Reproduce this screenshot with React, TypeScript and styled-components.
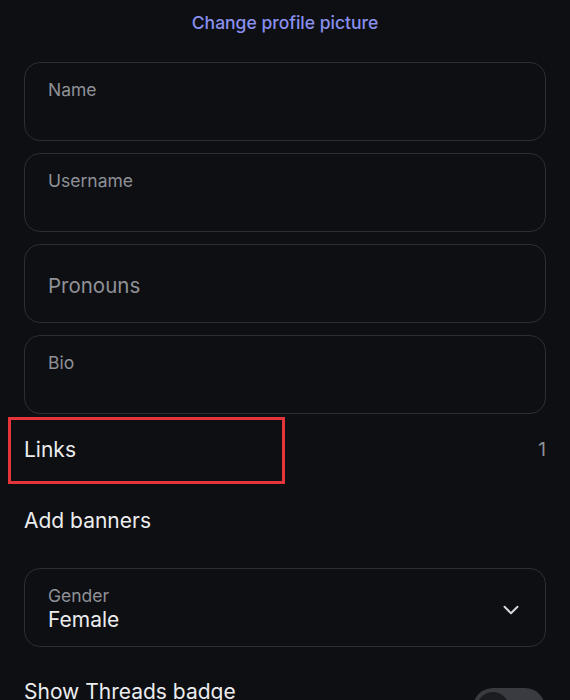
import styled, { createGlobalStyle } from "styled-components";
import { ChevronDown } from "lucide-react";

const GlobalStyle = createGlobalStyle`
  html, body {
    margin: 0;
    padding: 0;
    background: #0d0f13;
  }
  body {
    font-family: Inter, "Noto Sans", "Liberation Sans", sans-serif;
    color: #ececee;
    -webkit-font-smoothing: antialiased;
  }
`;

const Page = styled.div`
  width: 570px;
  height: 700px;
  overflow: hidden;
  background: #0d0f13;
  box-sizing: border-box;
  padding: 0 24px;
  display: flex;
  flex-direction: column;

  & > * {
    flex-shrink: 0;
  }
`;

const ChangePicture = styled.div`
  padding-top: 12px;
  margin-bottom: 28px;
  text-align: center;
  line-height: 22px;
  font-size: 17.5px;
  font-weight: 500;
  color: #8a90ee;
`;

const FieldList = styled.div`
  display: flex;
  flex-direction: column;
  gap: 12px;
`;

const FieldBox = styled.div<{ $centered?: boolean }>`
  flex-shrink: 0;
  height: 79px;
  box-sizing: border-box;
  border: 1.5px solid #2b2e34;
  border-radius: 16px;
  padding: ${(p) => (p.$centered ? "4px 23px 0" : "15px 23px 0")};
  display: flex;
  flex-direction: column;
  justify-content: ${(p) => (p.$centered ? "center" : "flex-start")};
`;

const FieldLabel = styled.div`
  font-size: 17.5px;
  line-height: 24px;
  color: #8f9197;
`;

const Placeholder = styled.div`
  font-size: 20.5px;
  line-height: 26px;
  color: #8f9197;
`;

const FieldValue = styled.div`
  font-size: 21px;
  line-height: 26px;
  color: #ececee;
`;

const Row = styled.div`
  position: relative;
  height: 71px;
  display: flex;
  align-items: center;
  justify-content: space-between;
  font-size: 21px;
  color: #ececee;
`;

const RowCount = styled.span`
  color: #8f9197;
  font-size: 19px;
`;

const Highlight = styled.div`
  position: absolute;
  left: -16px;
  top: 3px;
  width: 277px;
  height: 67px;
  box-sizing: border-box;
  border: 3.5px solid #e5343a;
  pointer-events: none;
`;

const SelectBox = styled(FieldBox)`
  margin-top: 12px;
  flex-direction: row;
  align-items: flex-start;
  justify-content: space-between;
  padding: 16px 21px 0 23px;
`;

const SelectText = styled.div`
  display: flex;
  flex-direction: column;
`;

const SelectLabel = styled.div`
  font-size: 17.5px;
  line-height: 22px;
  color: #8f9197;
`;

const Chevron = styled.div`
  margin-top: 12px;
  color: #d6d7da;
  display: flex;
`;

const ToggleRow = styled.div`
  margin-top: 12px;
  padding-top: 20px;
  display: flex;
  justify-content: space-between;
  align-items: flex-start;
  font-size: 21px;
  line-height: 26px;
  color: #ececee;
`;

const Toggle = styled.div`
  margin-top: 9px;
  margin-right: 1px;
  width: 72px;
  height: 40px;
  border-radius: 20px;
  background: #393b40;
  display: flex;
  align-items: center;
  padding: 0 4px;
  box-sizing: border-box;
`;

const Knob = styled.div`
  width: 32px;
  height: 32px;
  border-radius: 50%;
  background: #1b1d21;
`;

const fields = [
  { label: "Name" },
  { label: "Username" },
  { label: "Pronouns", placeholder: true },
  { label: "Bio" },
];

export default function App() {
  return (
    <>
      <GlobalStyle />
      <Page>
        <ChangePicture>Change profile picture</ChangePicture>
        <FieldList>
          {fields.map((f) => (
            <FieldBox key={f.label} $centered={f.placeholder}>
              {f.placeholder ? (
                <Placeholder>{f.label}</Placeholder>
              ) : (
                <FieldLabel>{f.label}</FieldLabel>
              )}
            </FieldBox>
          ))}
        </FieldList>
        <Row>
          <span>Links</span>
          <RowCount>1</RowCount>
          <Highlight />
        </Row>
        <Row>
          <span>Add banners</span>
        </Row>
        <SelectBox>
          <SelectText>
            <SelectLabel>Gender</SelectLabel>
            <FieldValue>Female</FieldValue>
          </SelectText>
          <Chevron>
            <ChevronDown size={26} strokeWidth={1.8} />
          </Chevron>
        </SelectBox>
        <ToggleRow>
          <span>Show Threads badge</span>
          <Toggle>
            <Knob />
          </Toggle>
        </ToggleRow>
      </Page>
    </>
  );
}
